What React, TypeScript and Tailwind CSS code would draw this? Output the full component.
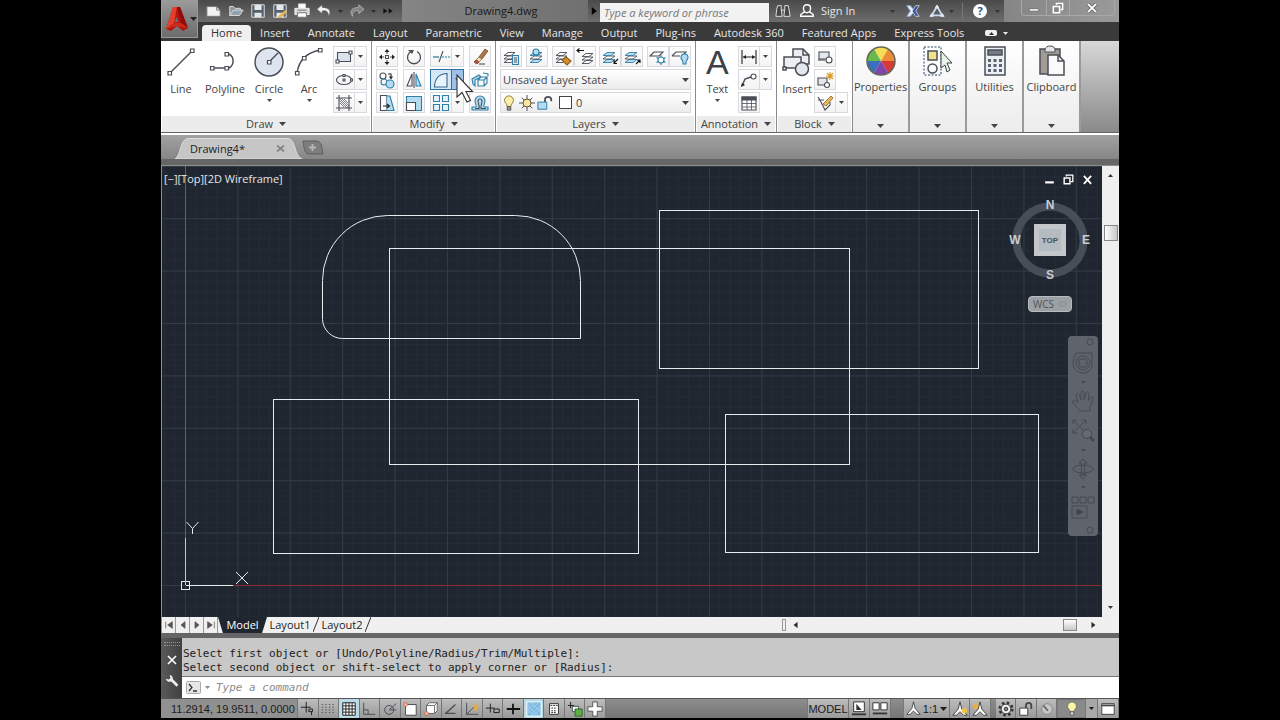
import React from 'react';
import clsx from 'clsx';

type Kids = { children?: React.ReactNode };

const MENU = ['Home', 'Insert', 'Annotate', 'Layout', 'Parametric', 'View', 'Manage', 'Output', 'Plug-ins', 'Autodesk 360', 'Featured Apps', 'Express Tools'];

const INK = '#4a4f57';
const BLUE = '#2f7fa8';
const SKY = '#b5dcf0';

function Icon({ children, size = 18 }: Kids & { size?: number }) {
  return (
    <svg width={size} height={size} viewBox="0 0 18 18" fill="none" stroke={INK} strokeWidth="1.1" className="shrink-0" aria-hidden="true">
      {children}
    </svg>
  );
}

function BigIcon({ children }: Kids) {
  return (
    <svg width="32" height="32" viewBox="0 0 32 32" fill="none" stroke={INK} strokeWidth="1.500" className="shrink-0" aria-hidden="true">
      {children}
    </svg>
  );
}

function Caret({ className }: { className?: string }) {
  return (
    <svg width="7" height="4" viewBox="0 0 7 4" className={clsx('shrink-0', className)} aria-hidden="true">
      <path d="M0 0H7L3.500 4Z" fill="currentColor" />
    </svg>
  );
}

function SmallCaret() {
  return (
    <svg width="5" height="3" viewBox="0 0 5 3" className="shrink-0" aria-hidden="true">
      <path d="M0 0H5L2.500 3Z" fill="currentColor" />
    </svg>
  );
}

/* ---------- ribbon building blocks ---------- */

function Panel({ title, width, children }: Kids & { title: string; width: string }) {
  return (
    <section className={clsx('flex shrink-0 flex-col border-r border-[#8a8a8a] bg-white', width)}>
      <div className="flex h-[75px] items-start justify-between px-1 pt-[5px]">{children}</div>
      <button className="mx-px flex h-4 items-center justify-center gap-1.5 bg-[#ececec] text-[#444]">
        {title}
        <Caret />
      </button>
    </section>
  );
}

function ClosedPanel({ title, width, children }: Kids & { title: string; width: string }) {
  return (
    <button className={clsx('flex shrink-0 flex-col items-center border-r-2 border-[#9a9a9a] bg-linear-to-b from-white to-[#ececec] pt-1 pb-1', width)}>
      <BigIcon>{children}</BigIcon>
      <span className="mt-0.5 leading-4">{title}</span>
      <Caret className="mt-auto" />
    </button>
  );
}

function ToolLabel({ label, menu }: { label: string; menu?: boolean }) {
  return (
    <>
      <span className="mt-[3px] mb-0.5 leading-4">{label}</span>
      {menu && <SmallCaret />}
    </>
  );
}

function BigTool({ label, menu, children }: Kids & { label: string; menu?: boolean }) {
  return (
    <button className="flex flex-col items-center text-[#444]">
      <BigIcon>{children}</BigIcon>
      <ToolLabel label={label} menu={menu} />
    </button>
  );
}

function Tool({ label, menu, active, children }: Kids & { label: string; menu?: boolean; active?: boolean }) {
  return (
    <div className={clsx('relative flex h-[21px] border', active ? 'border-[#2f6f9f] bg-[#d6e8f8]' : 'border-[#d8dadd] bg-linear-to-b from-white to-[#f3f3f3]')}>
      <button aria-label={label} className="flex w-5 items-center justify-center">
        <Icon>{children}</Icon>
      </button>
      {menu && (
        <button aria-label={label + ' options'} className={clsx('flex w-3 items-center justify-center border-l', active ? 'border-[#2f6f9f] bg-[#9fc0ea]' : 'border-[#d8dadd]')}>
          <SmallCaret />
        </button>
      )}
      {active && (
        <svg width="20" height="32" viewBox="0 0 20 32" className="pointer-events-none absolute top-1 left-[25px] z-20" aria-hidden="true">
          <path d="M1 1V23L6 18.500L11 28L14.500 26.500L10 17.500H16.500Z" fill="#fff" stroke="#333" strokeWidth="1.100" />
        </svg>
      )}
    </div>
  );
}

function Column({ children }: Kids) {
  return <div className="flex flex-col items-start gap-0.5">{children}</div>;
}

// three stacked sheets, shared by the layer tools
const stack = (
  <g strokeWidth=".9">
    <path d="M2 14.500L6 11.500H13L9 14.500Z" fill="#fff" />
    <path d="M2 11L6 8H13L9 11Z" fill="#fff" />
    <path d="M2 7.500L6 4.500H13L9 7.500Z" fill="#fff" />
  </g>
);

const blueStack = (
  <g strokeWidth=".9" stroke={BLUE}>
    <path d="M2 14.500L6 11.500H14L10 14.500Z" fill={SKY} />
    <path d="M2 11L6 8H14L10 11Z" fill="#fff" stroke={INK} />
    <path d="M2 7.500L6 4.500H14L10 7.500Z" fill={SKY} />
  </g>
);

/* ---------- header ---------- */

function TitleBar() {
  return (
    <div className="flex h-[22px] bg-linear-to-b from-[#4a4a4a] to-[#6d6d6d]">
      <div className="flex w-[204px] shrink-0 items-center gap-1.5 pl-2 text-[#2e2e2e]">
        <button aria-label="New"><Icon size={16}><path d="M1 4H12L16 8V15H1Z" fill="#f2f2f2" stroke="#777" /><path d="M12 4V8H16" stroke="#777" /></Icon></button>
        <button aria-label="Open"><Icon size={16}><path d="M2 14V4H6L8 6H14V8" fill="#8b939c" stroke="#ddd" /><path d="M2 14L6 8H17L13 14Z" fill="#8fa0b0" stroke="#ddd" /></Icon></button>
        <button aria-label="Save"><Icon size={16}><path d="M2 2H16V16H2Z" fill="#56606c" stroke="#d9dde2" /><path d="M5 2H13V8H5ZM5 11H13V16H5Z" fill="#e4e7ea" stroke="none" /></Icon></button>
        <button aria-label="Save As"><Icon size={16}><path d="M2 2H16V16H2Z" fill="#56606c" stroke="#d9dde2" /><path d="M5 2H13V8H5ZM5 11H13V16H5Z" fill="#e4e7ea" stroke="none" /><path d="M8 16L16 9" stroke="#e8b448" strokeWidth="3" /></Icon></button>
        <button aria-label="Plot"><Icon size={16}><path d="M5 1H13V6H5Z" fill="#fff" stroke="#ccc" /><path d="M1 6H17V13H1Z" fill="#d6d8da" stroke="#eee" /><path d="M4 8H14" stroke="#777" /><path d="M4 11H14V16H4Z" fill="#fff" stroke="#777" /></Icon></button>
        <button aria-label="Undo"><Icon size={16}><path d="M7 2L1 7L7 12V9C12 8 14 10 14 15C18 9 15 5 7 5Z" fill="#f1f1f1" stroke="#555" strokeWidth=".6" /></Icon></button>
        <SmallCaret />
        <button aria-label="Redo"><Icon size={16}><path d="M11 2L17 7L11 12V9C6 8 4 10 4 15C0 9 3 5 11 5Z" fill="#858585" stroke="#bbb" strokeWidth=".8" /></Icon></button>
        <SmallCaret />
        <button aria-label="More tools"><Icon size={12}><path d="M2 5L8 9L2 13ZM10 5L16 9L10 13Z" fill="#111" stroke="none" /></Icon></button>
      </div>
      <div className="flex min-w-0 flex-1 items-center justify-center bg-linear-to-r from-[#858585] to-[#707070] pl-3 text-[#181818]">Drawing4.dwg</div>
      <div className="flex w-[416px] shrink-0 items-center">
        <button aria-label="Collapse search" className="flex h-full w-3 items-center justify-center"><Icon size={10}><path d="M5 2L14 9L5 16Z" fill="#000" stroke="none" /></Icon></button>
        <input aria-label="Search help" placeholder="Type a keyword or phrase" className="mt-0.5 h-[19px] w-[169px] bg-[#f2f2f2] px-1 italic placeholder:text-[#777]" />
        <button aria-label="Search" className="ml-1.5"><Icon size={16}><path d="M3 3H7V7L8 15H1L2 7ZM11 3H15L17 15H10L11 7ZM7 8H11" fill="#444" stroke="#ddd" /></Icon></button>
        <button className="ml-2 flex items-center gap-1.5 text-[#e8e8e8]">
          <Icon size={16}><path d="M9 2C12 2 13 4 13 6C13 9 11 11 9 11C7 11 5 9 5 6C5 4 6 2 9 2ZM6 10L2 13V15H16V13L12 10" fill="#555" stroke="#fff" strokeWidth="1.600" /></Icon>
          Sign In
        </button>
        <span className="ml-auto text-[#333]"><SmallCaret /></span>
        <button aria-label="Exchange Apps" className="ml-2.5"><Icon size={16}><path d="M2 3H6L11 9L6 15H2L6 9Z" fill="#e7ecf5" stroke="#8fa3cf" /><path d="M16 3H12L8 9L12 15H16L12 9Z" fill="#36549b" stroke="#e7ecf5" strokeWidth=".8" /></Icon></button>
        <button aria-label="Stay connected" className="ml-2"><Icon size={16}><path d="M9 4L3 14H15Z" stroke="#cbd9ee" strokeWidth="2" /><path d="M9 2.500L11 5.500H7ZM3 12L5 15H1ZM15 12L17 15H13Z" fill="#dde6f4" stroke="#dde6f4" /></Icon></button>
        <span className="ml-1 text-[#333]"><SmallCaret /></span>
        <span className="ml-2 h-4 w-px bg-[#777]" />
        <button aria-label="Help" className="ml-2.5 flex size-3.5 items-center justify-center rounded-full bg-white font-bold text-[#2a4c8c]">?</button>
        <span className="mr-1 ml-2 text-[#333]"><SmallCaret /></span>
      </div>
      <div className="flex w-[115px] shrink-0 items-start justify-end bg-linear-to-r from-[#858585] to-[#9a9a9a] pr-1">
        <div className="flex h-4 rounded-b border border-t-0 border-[#a8a8a8]">
          <button aria-label="Minimize" className="flex w-6 items-center justify-center"><Icon size={14}><path d="M3 10H15V13H3Z" fill="#fff" stroke="#555" strokeWidth=".8" /></Icon></button>
          <button aria-label="Restore" className="flex w-6 items-center justify-center border-x border-[#a8a8a8]"><Icon size={14}><path d="M7 5V3H15V11H12" stroke="#fff" strokeWidth="1.800" /><path d="M3 7H11V15H3Z" fill="#888" stroke="#fff" strokeWidth="2" /></Icon></button>
          <button aria-label="Close" className="flex w-11 items-center justify-center"><Icon size={14}><path d="M4 4L14 14M14 4L4 14" stroke="#555" strokeWidth="4" /><path d="M4 4L14 14M14 4L4 14" stroke="#fff" strokeWidth="2.500" /></Icon></button>
        </div>
      </div>
    </div>
  );
}

function Header() {
  return (
    <header className="flex bg-[#3a3a3a]">
      <button aria-label="Application menu" className="flex h-[38px] w-[37px] shrink-0 items-center gap-0.5 border border-[#999] bg-linear-to-b from-[#9a9a9a] to-[#6c6c6c] pl-1 text-[#222]">
        <svg width="22" height="26" viewBox="0 0 22 26" className="shrink-0" aria-hidden="true">
          <path d="M7 1H14L22 22L17 25L11 20L5 25L0 23Z" fill="#b5150f" />
          <path d="M7 1H11L8 17L0 23Z" fill="#e2402c" />
          <path d="M14 1L22 22L15 17L11 1Z" fill="#8e0d0a" />
          <path d="M8 17H15L22 22L11 20L0 23Z" fill="#d02a1c" />
          <path d="M10.500 11L12.500 16H8.500Z" fill="#6e6e6e" />
        </svg>
        <Caret />
      </button>
      <div className="min-w-0 flex-1">
        <TitleBar />
        <nav className="flex h-[19px] items-end pl-1 text-[#e6e6e6]">
          {MENU.map((m, i) => (
            <button key={m} className={clsx('h-4 px-[9px] whitespace-nowrap', i === 0 && 'rounded-t-sm bg-[#f0f0f0] text-[#333]')}>
              {m}
            </button>
          ))}
          <button aria-label="Ribbon display" className="ml-3 flex h-4 items-center gap-1.5">
            <span className="flex h-1.5 w-3 items-center justify-center rounded-xs bg-[#eee] text-[#333]"><span className="rotate-180"><SmallCaret /></span></span>
            <SmallCaret />
          </button>
        </nav>
      </div>
    </header>
  );
}

/* ---------- ribbon ---------- */

function Ribbon() {
  return (
    <div className="flex h-[92px] border-b border-[#666] bg-linear-to-b from-[#d8d8d8] to-[#8a8a8a] text-[#444]">
      <Panel title="Draw" width="w-[211px]">
        <BigTool label="Line">
          <path d="M5 27L27 5" />
          <path d="M3 25.500H6.500V29H3ZM25.500 3H29V6.500H25.500Z" fill="#fff" strokeWidth="1.200" />
        </BigTool>
        <BigTool label="Polyline">
          <path d="M3 22H20A8 8 0 0 0 20 8H18" />
          <path d="M1.500 20.500H5V24H1.500ZM16 20.500H19.500V24H16ZM16 6.500H19.500V10H16Z" fill="#fff" strokeWidth="1.200" />
        </BigTool>
        <BigTool label="Circle" menu>
          <circle cx="16" cy="16" r="14" fill="#dfe5f0" />
          <path d="M16 16L25 7" />
          <path d="M14.500 14.500H18V18H14.500Z" fill="#fff" strokeWidth="1.200" />
        </BigTool>
        <BigTool label="Arc" menu>
          <path d="M4 27C6 14 14 6 28 4" />
          <path d="M2.500 25.500H6V29H2.500ZM25.500 2.500H29V6H25.500ZM9.500 10.500H13V14H9.500Z" fill="#fff" strokeWidth="1.200" />
        </BigTool>
        <Column>
          <Tool label="Rectangle" menu><path d="M2.500 4.500H15.500V13.500H2.500Z" fill="#dde3ec" /><path d="M1 12H4V15H1ZM14 3H17V6H14Z" fill="#fff" /></Tool>
          <Tool label="Ellipse" menu><ellipse cx="9" cy="9" rx="7.500" ry="4.500" /><path d="M8 8H10V10H8ZM8 3.500H10V5.500H8ZM15.500 8H17.500V10H15.500Z" fill="#fff" /></Tool>
          <Tool label="Hatch" menu><path d="M4 1V17M14 1V17M1 4H17M1 14H17" /><path d="M5 5L13 13M5 9L9 13M9 5L13 9M6 4L14 12M4 6L12 14" strokeWidth=".7" /></Tool>
        </Column>
      </Panel>

      <Panel title="Modify" width="w-[124px]">
        <Column>
          <Tool label="Move"><path d="M7.500 7.500H10.500V10.500H7.500Z" /><path d="M9 1L11.500 4H6.500ZM9 17L6.500 14H11.500ZM1 9L4 6.500V11.500ZM17 9L14 11.500V6.500Z" fill="#222" stroke="none" /><path d="M9 4V6M9 12V14M4 9H6M12 9H14" /></Tool>
          <Tool label="Copy"><circle cx="5" cy="5" r="3" /><circle cx="6" cy="11" r="3" stroke={BLUE} /><circle cx="12" cy="13" r="4" fill={SKY} stroke={BLUE} /><path d="M10 3H13V7M11.500 5.500L13 7.500L14.500 5.500" stroke="#222" /></Tool>
          <Tool label="Stretch"><path d="M2.500 1.500H8.500V16.500H2.500Z" fill="#fff" /><path d="M8.500 2H12L16 16.500H8.500" fill={SKY} stroke={BLUE} /><path d="M5 12H11M9 10L11.500 12L9 14" stroke="#222" /></Tool>
        </Column>
        <Column>
          <Tool label="Rotate"><path d="M6 3.500A6.500 6.500 0 1 0 12 3.500" strokeWidth="1.300" /><path d="M3 2L9 2L7 6Z" fill={INK} stroke="none" /></Tool>
          <Tool label="Mirror"><path d="M7 3V15H2Z" /><path d="M11 3V15H16Z" fill={SKY} stroke={BLUE} /><path d="M9 1V17" /></Tool>
          <Tool label="Scale"><path d="M1.500 2.500H16.500V16.500H1.500Z" fill={SKY} stroke={BLUE} /><path d="M1.500 8.500H10.500V16.500H1.500Z" fill="#fff" /></Tool>
        </Column>
        <Column>
          <Tool label="Trim" menu><path d="M1 9H7" stroke={BLUE} strokeWidth="1.300" /><path d="M7 14L11 3" /><path d="M10 9H18" stroke={BLUE} strokeDasharray="2 1" /></Tool>
          <Tool label="Fillet" menu active><path d="M2.500 16C2.500 8 7 2.500 15 2.500V16Z" fill="#e9f1fa" stroke="#35658f" /></Tool>
          <Tool label="Array" menu><path d="M1.500 1.500H7.500V7.500H1.500ZM1.500 10.500H7.500V16.500H1.500ZM10.500 10.500H16.500V16.500H10.500ZM10.500 1.500H16.500V7.500H10.500Z" fill="#e4f2fa" stroke={BLUE} /></Tool>
        </Column>
        <Column>
          <Tool label="Erase"><path d="M8 9L14 1L17 3L11 11Z" fill="#a8764a" stroke="#7a4a28" strokeWidth=".8" /><path d="M5 12L8 9L11 11L8 14Z" fill="#f0dcb0" stroke="#8a6a40" strokeWidth=".8" /><path d="M3 14L5 12L8 14L6 16Z" fill="#c0503a" stroke="#7a3a20" strokeWidth=".8" /><path d="M8 16H14" /></Tool>
          <Tool label="Explode"><path d="M1 8L8 4L10 6L4 9V15L2 13Z" fill={SKY} stroke={BLUE} /><path d="M7 9H13V15H7ZM7 9L10 6H16L13 9M16 6V12L13 15" fill="#fff" stroke={BLUE} /><path d="M12 2L17 3V5" stroke={BLUE} /></Tool>
          <Tool label="Offset"><path d="M1 16H17V13H13C12 12 14 9 14 7A5 5 0 0 0 4 7C4 9 6 12 5 13H1Z" fill={SKY} stroke={BLUE} /><path d="M4 14.500H8C9 12 7 9 7 7A2 2 0 0 1 11 7C11 9 9.500 12 10 14.500H15" /></Tool>
        </Column>
      </Panel>

      <Panel title="Layers" width="w-[200px]">
        <div className="flex flex-1 flex-col gap-0.5">
          <div className="flex justify-between">
            <Tool label="Layer Properties">{stack}<path d="M10.500 7.500H16.500V16.500H10.500Z" fill="#dcebf5" stroke={BLUE} /><path d="M12 10H15M12 12H15M12 14H15" /></Tool>
            <Tool label="Make Current">{blueStack}<circle cx="8" cy="4" r="3" fill={SKY} stroke={BLUE} /></Tool>
            <div className="flex">
              <Tool label="Match Layer">{stack}<path d="M8 12L12 9L17 13L13 17Z" fill="#d98e2b" stroke="#8a5a20" /></Tool>
              <Tool label="Previous Layer"><g transform="translate(4 1)">{stack}</g><path d="M8 2.500H1M3.500 .5L1 2.500L3.500 4.500" stroke="#111" /></Tool>
            </div>
            <div className="flex">
              <Tool label="Isolate">{blueStack}<path d="M17 11L13 15M13 12V15.500H16" stroke="#111" /></Tool>
              <Tool label="Unisolate">{blueStack}<path d="M13 16L17 12M14 12H17V15" stroke="#111" /></Tool>
            </div>
            <div className="flex">
              <Tool label="Freeze"><path d="M1 8L5 4H14L10 8Z" /><path d="M12 7V17M7.500 9.500L16.500 14.500M16.500 9.500L7.500 14.500" stroke={BLUE} /><circle cx="12" cy="12" r="3" fill="#fff" stroke={BLUE} /></Tool>
              <Tool label="Off"><path d="M1 8L5 4H15L13 6M1 8H9" /><path d="M12 14C12 12 10 12 10 9.500A3.500 3.500 0 0 1 17 9.500C17 12 15 12 15 14V16H12Z" fill={SKY} stroke={BLUE} /></Tool>
            </div>
          </div>
          <div className="grid h-[21px] border border-[#d8dadd] bg-linear-to-b from-white to-[#ececec]">
            <select aria-label="Layer state" className="col-start-1 row-start-1 appearance-none px-0.5 text-[11px]">
              <option>Unsaved Layer State</option>
            </select>
            <Caret className="pointer-events-none col-start-1 row-start-1 mr-px self-center justify-self-end" />
          </div>
          <div className="flex h-[21px] items-center gap-0.5 border border-[#d8dadd] bg-linear-to-b from-white to-[#ececec]">
            <button aria-label="Layer on"><Icon size={16}><path d="M7 13C7 10 4 9 4 6A5 5 0 0 1 14 6C14 9 11 10 11 13Z" fill="#fdf0a6" stroke="#8a7a40" /><path d="M7 13H11V17H7Z" fill="#999" stroke="#555" /></Icon></button>
            <button aria-label="Layer thawed"><Icon size={16}><path d="M9 0V18M0 9H18M3 3L15 15M15 3L3 15" /><circle cx="9" cy="9" r="4.500" fill="#fbe7a0" stroke="#5d5030" /></Icon></button>
            <button aria-label="Layer unlocked"><Icon size={16}><path d="M1 8H11V16H1Z" fill={SKY} stroke={BLUE} /><path d="M9 8V5C9 1 16 1 16 5V7" strokeWidth="2" /></Icon></button>
            <span className="ml-1 size-[13px] border border-[#444] bg-white" />
            <div className="grid flex-1">
              <select aria-label="Layer" className="col-start-1 row-start-1 appearance-none px-0.5 text-[11px]">
                <option>0</option>
              </select>
              <Caret className="pointer-events-none col-start-1 row-start-1 mr-px self-center justify-self-end" />
            </div>
          </div>
        </div>
      </Panel>

      <Panel title="Annotation" width="w-[81px]">
        <button className="flex flex-col items-center pl-1.5 text-[#444]">
          <span className="h-8 font-['Liberation_Sans',Arial,sans-serif] text-[34px] leading-8 text-[#3d4148]" aria-hidden="true">A</span>
          <ToolLabel label="Text" menu />
        </button>
        <Column>
          <Tool label="Dimension" menu><path d="M2 2V16M16 2V16M3 9H15" stroke="#222" /><path d="M3 9L6 7V11ZM15 9L12 7V11Z" fill="#222" stroke="none" /></Tool>
          <Tool label="Leader" menu><path d="M2 15L5 8L11 6" strokeWidth="1.500" /><circle cx="13.500" cy="5.500" r="2.500" /><path d="M1 16L2 12L5 14Z" fill="#222" stroke="none" /></Tool>
          <Tool label="Table"><path d="M2 3H16V16H2Z" fill="#fff" /><path d="M2 3H16V6H2Z" fill={INK} /><path d="M2 9.500H16M2 13H16M7 6V16M11.500 6V16" strokeWidth=".8" /></Tool>
        </Column>
      </Panel>

      <Panel title="Block" width="w-[76px]">
        <BigTool label="Insert">
          <path d="M12 3H22L28 9V18H12Z" fill="#eceef2" />
          <path d="M22 3V9H28" />
          <path d="M3 11H20V22H3Z" fill="#eceef2" />
          <circle cx="21" cy="23" r="6.500" fill="#e3e7ee" />
          <path d="M2 21H5V24H2Z" fill="#fff" />
        </BigTool>
        <Column>
          <Tool label="Create Block"><path d="M3 4H13V11H3Z" fill="#e3e7ee" /><circle cx="13" cy="12" r="3" fill="#fff" /><path d="M2 12H9" /></Tool>
          <Tool label="Edit Block"><path d="M2 7H11V14H2Z" fill="#e3e7ee" /><circle cx="11" cy="14" r="2.500" fill="#fff" /><path d="M14 1V9M10 5H18M11 2L17 8M17 2L11 8" stroke="#d99a28" /></Tool>
          <Tool label="Edit Attributes" menu><path d="M2 3L4 6L9 16L14 11V8M2 6H8" fill="#fff" /><path d="M7 10L15 2L17 4L10 12Z" fill="#e8b860" stroke="#8a6020" strokeWidth=".8" /></Tool>
        </Column>
      </Panel>

      <ClosedPanel title="Properties" width="w-[57px]">
        <g stroke="none">
          <path d="M16 16L9 4A14 14 0 0 1 23 4Z" fill="#f5dd55" />
          <path d="M16 16L23 4A14 14 0 0 1 30 16Z" fill="#ee8a35" />
          <path d="M16 16H30A14 14 0 0 1 23 28Z" fill="#d73838" />
          <path d="M16 16L23 28A14 14 0 0 1 9 28Z" fill="#7c46ad" />
          <path d="M16 16L9 28A14 14 0 0 1 2 16Z" fill="#3b6fbe" />
          <path d="M16 16H2A14 14 0 0 1 9 4Z" fill="#67b94b" />
        </g>
        <circle cx="16" cy="16" r="14" stroke="#665" />
      </ClosedPanel>
      <ClosedPanel title="Groups" width="w-[57px]">
        <path d="M2 2H19V30H2Z" stroke="#27406a" strokeWidth="1" strokeDasharray="2 1.500" />
        <path d="M6 6H15V15H6Z" fill="#f2e08a" />
        <circle cx="10.500" cy="23.500" r="4.500" />
        <path d="M19 6V23L23 20L25 27L28 25L25 18H30Z" fill="#e8f0e8" stroke="#344" strokeWidth="1" />
      </ClosedPanel>
      <ClosedPanel title="Utilities" width="w-[57px]">
        <path d="M6 2H26V30H6Z" fill="#eceff3" />
        <path d="M9 5H23V10H9Z" fill="#777d87" />
        <path d="M9 14H12V17H9ZM14.500 14H17.500V17H14.500ZM20 14H23V17H20ZM9 19H12V22H9ZM14.500 19H17.500V22H14.500ZM20 19H23V22H20ZM9 24H12V27H9ZM14.500 24H17.500V27H14.500ZM20 24H23V27H20Z" fill="#596372" stroke="none" />
      </ClosedPanel>
      <ClosedPanel title="Clipboard" width="w-[57px]">
        <path d="M4 4H24V29H4Z" fill="#a09b94" />
        <path d="M9 5C9 2 12 1 14 1C17 1 19 2 19 5V7H9Z" fill="#e6e6e6" strokeWidth="1" />
        <path d="M12 10H22L28 16V30H12Z" fill="#fafafa" />
        <path d="M22 10V16H28" />
      </ClosedPanel>
    </div>
  );
}

function FileTabs() {
  return (
    <div className="flex h-8 items-end border-t-2 border-b-6 border-t-white border-b-[#666] bg-linear-to-b from-[#a2a2a2] to-[#868686] pl-[14px]">
      <div className="relative flex h-[21px] w-[127px] items-center justify-between pr-[17px] pl-[15px] text-[#222]">
        <svg width="127" height="21" viewBox="0 0 127 21" className="absolute inset-0" aria-hidden="true">
          <path d="M0 21C6 18 5 1 13 .5H113C121 1 119 18 127 21Z" fill="#c6c6c6" stroke="#dedede" />
        </svg>
        <button className="relative">Drawing4*</button>
        <button aria-label="Close tab" className="relative flex"><Icon size={9}><path d="M2 3L16 15M16 3L2 15" stroke="#858585" strokeWidth="3.500" /></Icon></button>
      </div>
      <button aria-label="New tab">
        <svg width="22" height="19" viewBox="0 0 22 19" aria-hidden="true">
          <path d="M1 1H14C20 1 20 8 21 14H7C2 14 2 6 1 1Z" fill="#7d7d7d" stroke="#5e5e5e" />
          <path d="M10.500 4V11M7 7.500H14" stroke="#b5b5b5" strokeWidth="2" />
        </svg>
      </button>
    </div>
  );
}

/* ---------- drawing area ---------- */

function Drawing() {
  return (
    <svg className="absolute inset-0 size-full" shapeRendering="crispEdges" fill="none" aria-hidden="true">
      <defs>
        <pattern id="minor" x="23" y="419" width="10.480" height="10.480" patternUnits="userSpaceOnUse">
          <path d="M.5 0V10.480M0 .5H10.480" stroke="#232b36" />
        </pattern>
        <pattern id="major" x="23" y="419" width="52.400" height="52.400" patternUnits="userSpaceOnUse">
          <path d="M.5 0V52.400M0 .5H52.400" stroke="#313a45" />
        </pattern>
      </defs>
      <rect width="100%" height="100%" fill="url(#minor)" />
      <rect width="100%" height="100%" fill="url(#major)" />
      <rect x="23" y="0" width="1" height="372" fill="#2f8440" />
      <rect x="71" y="419" width="100%" height="1" fill="#8c2c34" />
      <g stroke="#e9ecef">
        <rect x="227.500" y="82.500" width="460" height="216" />
        <rect x="497.500" y="44.500" width="319" height="158" />
        <rect x="111.500" y="233.500" width="365" height="154" />
        <rect x="563.500" y="248.500" width="313" height="138" />
        <path shapeRendering="auto" d="M160.500 153.500V114.500A65 65 0 0 1 225.500 49.500H353.500A65 65 0 0 1 418.500 114.500V172.500H180.500A20 20 0 0 1 160.500 153.500Z" />
        <path d="M19.500 415.500H27.500V423.500H19.500ZM23.500 419.500H71" />
        <path d="M23.500 419V372" stroke="#b9d3ae" />
        <path shapeRendering="auto" d="M24.500 356L30.500 362.500L36.500 356M30.500 362.500V368M74 406L86 418M86 406L74 418" />
      </g>
    </svg>
  );
}

function ViewCube() {
  return (
    <div className="absolute top-[30px] right-[10px] flex w-[84px] flex-col items-center">
      <svg width="84" height="88" viewBox="0 0 84 88" fontFamily="Liberation Sans, sans-serif" fontWeight="bold" fontSize="12" textAnchor="middle" aria-label="View cube">
        <circle cx="42" cy="44" r="33.500" fill="none" stroke="#484e58" strokeWidth="8" />
        <rect x="26" y="28" width="32" height="32" fill="#c3c7ca" />
        <rect x="31" y="33" width="22" height="22" fill="#b4bcc2" />
        <text x="42" y="47" fontSize="8" fill="#4a5058">TOP</text>
        <g fill="#c9ccd0">
          <text x="42" y="13">N</text>
          <text x="7" y="48">W</text>
          <text x="78" y="48">E</text>
          <text x="42" y="83">S</text>
        </g>
      </svg>
      <button className="mt-3 flex h-4 w-11 items-center justify-center gap-1 rounded-sm border border-[#b8bcc0] bg-[#9ba0a5] text-[10px] text-[#50555b]">
        WCS
        <svg width="9" height="6" viewBox="0 0 9 6" aria-hidden="true"><path d="M1 1H8V5H1Z" fill="none" stroke="#888e94" /></svg>
      </button>
    </div>
  );
}

function NavBar() {
  const s = { fill: 'none', stroke: '#444a53', strokeWidth: 1 };
  return (
    <div className="absolute top-[170px] right-1 flex h-[200px] w-[30px] flex-col items-center justify-between rounded-sm bg-[#5f646c] py-0.5 text-[#444a53]">
      <button aria-label="Close navigation bar" className="mr-1 self-end"><svg width="8" height="8" {...s}><circle cx="4" cy="4" r="3" /></svg></button>
      <button aria-label="Steering wheel"><svg width="22" height="22" {...s}><path d="M4 1H20V13C20 18 16 21 11 21C5 21 1 17 1 11C1 7 3 4 4 1Z" /><circle cx="11" cy="11" r="7" /><rect x="7" y="7" width="8" height="8" rx="2" /></svg></button>
      <SmallCaret />
      <button aria-label="Pan"><svg width="24" height="22" {...s}><path d="M9 21C6 18 4 14 1 12C2 9 5 11 7 13L5 5C6 3 8 4 8 5L10 10V2C11 0 13 1 13 2V10L15 3C16 1 18 2 18 4L17 11L20 7C22 6 23 8 22 9L19 17V21Z" /></svg></button>
      <button aria-label="Zoom extents"><svg width="24" height="24" {...s}><path d="M2 2L15 15M15 2L2 15M2 6V2H6M11 2H15V6M2 11V15H6" /><circle cx="16" cy="16" r="4.500" fill="#666b73" /><path d="M19 19L23 23" strokeWidth="3" /></svg></button>
      <SmallCaret />
      <button aria-label="Orbit"><svg width="24" height="22" {...s}><ellipse cx="12" cy="11" rx="10" ry="4" /><path d="M10.500 5V17H13.500V5H16L12 1L8 5ZM8 17L12 21L16 17Z" /></svg></button>
      <SmallCaret />
      <button aria-label="Show motion"><svg width="24" height="24" {...s}><path d="M1 1H7V7H1ZM9 1H15V7H9ZM17 1H23V7H17ZM1 10H16V22H1Z" /><path d="M6 13L12 16L6 19Z" fill="#3c424c" /></svg></button>
      <button aria-label="Customize navigation bar" className="mr-1 self-end"><svg width="8" height="8" {...s}><circle cx="4" cy="4" r="3" /></svg></button>
    </div>
  );
}

function Viewport() {
  return (
    <div className="flex min-h-0 flex-1 border-t border-l border-[#8f8f8f]">
      <main className="relative flex min-w-0 flex-1 items-start justify-between overflow-hidden bg-[#1f2630]">
        <Drawing />
        <div className="relative flex pt-[5px] pl-0.5 leading-4 text-[#e4e6e8]">
          <button>[−]</button>
          <button>[Top]</button>
          <button>[2D Wireframe]</button>
        </div>
        <div className="relative flex gap-1.5 pt-[7px] pr-2">
          <button aria-label="Minimize drawing"><Icon size={13}><path d="M3 13H15" stroke="#fff" strokeWidth="3" /></Icon></button>
          <button aria-label="Restore drawing"><Icon size={13}><path d="M6 5V3H15V12H12" stroke="#fff" strokeWidth="1.800" /><path d="M3 7H11V15H3Z" stroke="#fff" strokeWidth="2" /></Icon></button>
          <button aria-label="Close drawing"><Icon size={13}><path d="M4 4L14 15M14 4L4 15" stroke="#fff" strokeWidth="2.500" /></Icon></button>
        </div>
        <ViewCube />
        <NavBar />
      </main>
      <div className="flex w-[17px] shrink-0 flex-col items-center bg-[#efefef] py-2 text-[#333]">
        <button aria-label="Scroll up" className="rotate-180"><SmallCaret /></button>
        <div className="mt-12 h-4 w-3.5 border border-[#888] bg-linear-to-r from-white to-[#c8c8c8]" />
        <button aria-label="Scroll down" className="mt-auto"><SmallCaret /></button>
      </div>
    </div>
  );
}

function LayoutTabs() {
  const arrows = [
    ['First', 'M4 4V14M14 4L7 9L14 14Z'],
    ['Previous', 'M12 4L6 9L12 14Z'],
    ['Next', 'M6 4L12 9L6 14Z'],
    ['Last', 'M14 4V14M4 4L11 9L4 14Z'],
  ];
  return (
    <div className="flex h-4 shrink-0 items-stretch border-l border-[#8f8f8f] bg-[#f0f0f0] text-[#222]">
      {arrows.map(([name, d]) => (
        <button key={name} aria-label={name + ' layout'} className="flex w-3.5 items-center justify-center border-r border-[#999]">
          <Icon size={12}><path d={d} fill="#555" stroke="#555" /></Icon>
        </button>
      ))}
      <button className="w-[49px] bg-[#1f2630] text-white [clip-path:polygon(0_0,100%_0,90%_100%,10%_100%)]">Model</button>
      <button className="w-[46px] text-center">Layout1</button>
      <svg width="6" height="16" viewBox="0 0 6 16" aria-hidden="true"><path d="M6 0L0 15" stroke="#333" /></svg>
      <button className="w-[46px] text-center">Layout2</button>
      <svg width="6" height="16" viewBox="0 0 6 16" aria-hidden="true"><path d="M6 0L0 15" stroke="#333" /></svg>
      <div className="ml-auto flex w-[337px] items-center pr-[22px]">
        <span className="h-3 w-1 border border-[#999]" />
        <button aria-label="Scroll left" className="ml-1.5"><Icon size={8}><path d="M12 3L4 9L12 15Z" fill="#222" /></Icon></button>
        <div className="mr-3 ml-auto h-3 w-3.5 border border-[#888] bg-linear-to-b from-white to-[#c8c8c8]" />
        <button aria-label="Scroll right"><Icon size={8}><path d="M6 3L14 9L6 15Z" fill="#222" /></Icon></button>
      </div>
    </div>
  );
}

function CommandLine() {
  return (
    <div className="flex h-[65px] shrink-0 border-t-5 border-[#666]">
      <div className="flex w-[21px] shrink-0 flex-col items-center gap-2 bg-linear-to-r from-[#5a5a5a] to-[#404040] pt-1">
        <span className="h-1 w-4 border-y border-dotted border-[#999]" />
        <button aria-label="Close command line" className="flex"><Icon size={12}><path d="M3 3L15 15M15 3L3 15" stroke="#fff" strokeWidth="2.500" /></Icon></button>
        <button aria-label="Customize" className="flex"><Icon size={14}><path d="M8 7L16 15" stroke="#eee" strokeWidth="3.500" /><path d="M6 1L7 5L5 7L1 6C2 10 6 11 9 9C11 6 10 2 6 1Z" fill="#eee" stroke="none" /></Icon></button>
      </div>
      <div className="min-w-0 flex-1 font-['DejaVu_Sans_Mono',monospace] text-[11px] text-[#222]">
        <div className="h-[39px] border-b border-[#777] bg-[#c8c8c8] pt-[9px] pl-px leading-[14px] whitespace-nowrap">
          <p>Select first object or [Undo/Polyline/Radius/Trim/Multiple]:</p>
          <p>Select second object or shift-select to apply corner or [Radius]:</p>
        </div>
        <div className="flex h-[21px] items-center bg-white pl-1 text-[#888]">
          <button aria-label="Recent commands" className="flex items-center gap-1">
            <svg width="15" height="13" viewBox="0 0 15 13" fill="none" aria-hidden="true"><rect x=".5" y=".5" width="14" height="12" rx="1" fill="#e4e6ea" stroke="#aaa" /><path d="M3 3L6 6.500L3 10M7 10H11" stroke="#333" strokeWidth="1.300" /></svg>
            <SmallCaret />
          </button>
          <input aria-label="Command" placeholder="Type a command" className="ml-1.5 flex-1 italic placeholder:text-[#8c8c8c]" />
        </div>
      </div>
    </div>
  );
}

/* ---------- status bar ---------- */

const TOGGLES: [string, React.ReactNode, boolean?][] = [
  ['Infer constraints', <path d="M1 7H12M7 1V13M10 9H14V12H10ZM13 12V16" stroke="#222" />],
  ['Snap', <path d="M2 4H16M2 7H16M2 10H16M2 13H16" stroke="#555" strokeDasharray="1.500 2.500" />],
  ['Grid', <path d="M2 2H16V16H2ZM2 5.500H16M2 9H16M2 12.500H16M5.500 2V16M9 2V16M12.500 2V16" stroke="#222" fill="#fff" />, true],
  ['Ortho', <path d="M3 2V15H16M3 10H8V15" />],
  ['Polar tracking', <><circle cx="8" cy="10" r="5" /><path d="M8 10L16 3M8 10H16" /></>],
  ['Object snap', <><path d="M4 4H16V16H4Z" fill="#fff" /><circle cx="4" cy="4" r="2" fill="#fbb" stroke="#d64" /></>],
  ['3D object snap', <><path d="M4 5L7 2H16V11L13 14H4ZM4 5H13V14M13 5L16 2" fill="#fff" strokeWidth=".9" /><circle cx="4" cy="14" r="2" fill="#fbb" stroke="#d64" /></>],
  ['Object snap tracking', <path d="M14 4L3 14H14" strokeWidth="1.500" />],
  ['Dynamic UCS', <><path d="M3 2V15H16M3 15L11 7" /><path d="M12 1L13 5L17 5L14 8L15 12L11 9Z" fill="#f0a93c" stroke="none" /></>],
  ['Dynamic input', <path d="M1 8H11M6 3V13M10 9H16V13H10Z" stroke="#222" />],
  ['Lineweight', <path d="M2 9H9M9 3V15M9 9H17" stroke="#111" strokeWidth="2" />],
  ['Transparency', <><path d="M1 1H17V17H1Z" fill="#7cb9e2" stroke="#fff" /><path d="M2 6L6 2M2 10L10 2M2 14L14 2M5 16L16 5M9 16L16 9M2 10L8 16M2 5L13 16M6 2L16 12" stroke="#b5dbf2" strokeWidth=".8" /></>, true],
  ['Quick properties', <><path d="M4 3H14V15H4Z" fill="#fff" stroke="#333" /><path d="M5 5H13M6 8H12M6 11H12M6 13H12" stroke="#333" strokeDasharray="2 1" /></>],
  ['Selection cycling', <><path d="M1 5H8M4 1V8" stroke="#222" /><path d="M6 6H13V12H6Z" fill="#fff" /><path d="M9 9H17V17H9Z" fill="#5fae4c" stroke="#2c6b20" /></>],
  ['Annotation monitor', <path d="M6.500 1H11.500V6.500H17V11.500H11.500V17H6.500V11.500H1V6.500H6.500Z" fill="#fff" stroke="#555" />],
];

function StatusButton({ label, width = 'w-5', pressed, children }: Kids & { label: string; width?: string; pressed?: boolean }) {
  return (
    <button aria-label={label} className={clsx('flex shrink-0 items-center justify-center border-r border-[#777]', width, pressed ? 'border bg-[#8a8a8a]' : 'bg-linear-to-b from-[#bdbdbd] to-[#999]')}>
      <Icon size={16}>{children}</Icon>
    </button>
  );
}

const scaleMark = <path d="M9 1L11 9L17 16H13L9 12L5 16H1L7 9Z" fill="#fff" stroke="#444" />;

function StatusBar() {
  return (
    <footer className="flex h-5 shrink-0 items-stretch border-t border-[#555] bg-linear-to-b from-[#8d8d8d] to-[#757575] font-['Liberation_Sans',Arial,sans-serif] text-[12px] text-[#1c1c1c]">
      <div className="flex w-[136px] shrink-0 items-center bg-[#909090] pl-[10px] text-[11px] whitespace-nowrap">11.2914, 19.9511, 0.0000</div>
      <div className="flex w-[309px] shrink-0 border-l border-[#777]">
        {TOGGLES.map(([name, icon, on]) => (
          <button key={name} aria-label={name} className={clsx('flex flex-1 items-center justify-center border-r border-[#777]', on ? 'bg-[#b9d9e6]' : 'bg-linear-to-b from-[#bdbdbd] to-[#999]')}>
            <Icon size={16}>{icon}</Icon>
          </button>
        ))}
      </div>
      <div className="ml-auto flex">
        <button className="w-[42px] border-x border-[#777] bg-linear-to-b from-[#bdbdbd] to-[#999] text-[11px]">MODEL</button>
        <StatusButton label="Quick view layouts" width="w-[21px]"><path d="M3 1H15V12H3Z" fill="#fff" stroke="#333" /><path d="M6 3V10H12Z" fill="#333" stroke="none" /><path d="M1 15H17" stroke="#333" strokeWidth="2" /></StatusButton>
        <StatusButton label="Quick view drawings" width="w-[21px]"><path d="M1 2H8V10H1ZM10 2H17V10H10Z" fill="#fff" stroke="#333" /><path d="M1 14H17" stroke="#333" strokeWidth="2" /></StatusButton>
        <button aria-label="Annotation scale" className="ml-3 flex w-[47px] items-center justify-center gap-0.5 border-x border-[#777] bg-linear-to-b from-[#bdbdbd] to-[#999] text-[11px]">
          <Icon size={15}>{scaleMark}</Icon>1:1<Caret />
        </button>
        <StatusButton label="Annotation visibility">{scaleMark}<circle cx="14" cy="11" r="3" fill="#f3c240" stroke="none" /></StatusButton>
        <StatusButton label="Auto scale" width="w-[21px]">{scaleMark}<path d="M1 6L5 1L5 5L8 5L4 10Z" fill="#f3b030" stroke="none" /></StatusButton>
        <div className="w-[5px]" />
        <StatusButton label="Workspace"><circle cx="9" cy="9" r="7" stroke="#333" strokeWidth="3" strokeDasharray="2.750 2.750" /><circle cx="9" cy="9" r="5.500" fill="#eee" stroke="#333" /><circle cx="9" cy="9" r="2" fill="#888" stroke="#333" /></StatusButton>
        <StatusButton label="Lock position" width="w-[21px]"><path d="M2 8H11V16H2Z" fill="#fff" stroke="#444" /><path d="M9 8V5C9 1 15 1 15 5V9" stroke="#444" strokeWidth="2" /></StatusButton>
        <StatusButton label="Hardware acceleration"><circle cx="9" cy="9" r="6" fill="#c6c6c6" stroke="#8b8b8b" /><path d="M5 5L10 11" stroke="#666" strokeWidth="2" /></StatusButton>
        <StatusButton label="Isolate objects" width="w-[29px]" pressed><path d="M7 12C7 10 4 9 4 6A5 5 0 0 1 14 6C14 9 11 10 11 12Z" fill="#fdf5a8" stroke="#776" /><path d="M7 12H11V16H7Z" fill="#ccc" stroke="#666" /></StatusButton>
        <button aria-label="Status bar menu" className="flex w-3 items-center justify-center border-r border-[#777] bg-[#a8a8a8]"><SmallCaret /></button>
        <StatusButton label="Clean screen" width="w-[21px]"><path d="M2 3H16V15H2Z" fill="#fff" stroke="#444" /><path d="M2 5H16" stroke="#444" strokeWidth="2" /></StatusButton>
      </div>
    </footer>
  );
}

export default function App() {
  return (
    <div className="flex h-screen flex-col bg-black px-[161px] pb-0.5 font-['Open_Sans','Noto_Sans',sans-serif] text-[11px] leading-4">
      <Header />
      <Ribbon />
      <FileTabs />
      <Viewport />
      <LayoutTabs />
      <CommandLine />
      <StatusBar />
    </div>
  );
}
